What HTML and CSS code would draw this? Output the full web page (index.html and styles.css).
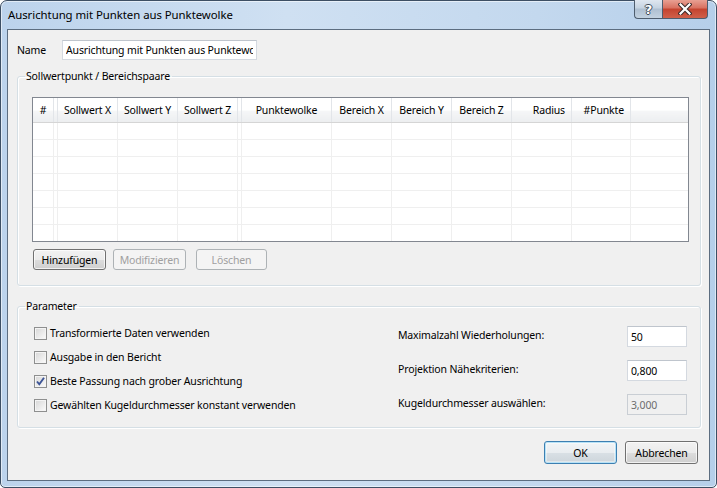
FILE: index.html
```html
<!DOCTYPE html>
<html lang="de">
<head>
    <meta charset="UTF-8">
    <title>Ausrichtung mit Punkten aus Punktewolke</title>
    <link rel="stylesheet" href="styles.css">
</head>
<body>
    <div class="window">
        <div class="titlebar">
            <span class="title">Ausrichtung mit Punkten aus Punktewolke</span>
            <div class="caption-buttons">
                <div class="cap-btn help">?</div>
                <div class="cap-btn close">
                    <svg width="14" height="12" viewBox="0 0 14 12">
                        <path d="M2.5 1.5 L11.5 10.5 M11.5 1.5 L2.5 10.5" stroke="#3b2a2a" stroke-width="4.2" stroke-linecap="square"/>
                        <path d="M2.5 1.5 L11.5 10.5 M11.5 1.5 L2.5 10.5" stroke="#fff" stroke-width="2.2" stroke-linecap="square"/>
                    </svg>
                </div>
            </div>
        </div>

        <div class="client">
            <div class="name-row">
                <label>Name</label>
                <input class="text-input name-input" type="text" value="Ausrichtung mit Punkten aus Punktewolke">
            </div>

            <fieldset class="group pairs">
                <legend>Sollwertpunkt / Bereichspaare</legend>
                <div class="grid">
                    <table>
                        <thead>
                            <tr>
                                <th class="c-num">#</th>
                                <th class="c-gap"></th>
                                <th class="c-val">Sollwert X</th>
                                <th class="c-val">Sollwert Y</th>
                                <th class="c-val">Sollwert Z</th>
                                <th class="c-gap"></th>
                                <th class="c-cloud">Punktewolke</th>
                                <th class="c-val">Bereich X</th>
                                <th class="c-val">Bereich Y</th>
                                <th class="c-val">Bereich Z</th>
                                <th class="c-radius right">Radius</th>
                                <th class="c-pts right">#Punkte</th>
                                <th class="c-rest"></th>
                            </tr>
                        </thead>
                        <tbody id="gridBody"></tbody>
                    </table>
                </div>
                <div class="grid-buttons">
                    <button class="btn">Hinzufügen</button>
                    <button class="btn" disabled>Modifizieren</button>
                    <button class="btn btn-delete" disabled>Löschen</button>
                </div>
            </fieldset>

            <fieldset class="group params">
                <legend>Parameter</legend>
                <div class="params-body">
                    <div class="checks">
                        <label class="check"><span class="box"></span>Transformierte Daten verwenden</label>
                        <label class="check"><span class="box"></span>Ausgabe in den Bericht</label>
                        <label class="check"><span class="box">
                            <svg width="11" height="11" viewBox="0 0 11 11"><path d="M2 5.5 L4.3 8.3 L9 1.8" fill="none" stroke="#3c5496" stroke-width="1.9"/></svg>
                        </span>Beste Passung nach grober Ausrichtung</label>
                        <label class="check"><span class="box"></span>Gewählten Kugeldurchmesser konstant verwenden</label>
                    </div>
                    <div class="fields">
                        <div class="field">
                            <span>Maximalzahl Wiederholungen:</span>
                            <input class="text-input small-input" type="text" value="50">
                        </div>
                        <div class="field">
                            <span>Projektion Nähekriterien:</span>
                            <input class="text-input small-input" type="text" value="0,800">
                        </div>
                        <div class="field">
                            <span>Kugeldurchmesser auswählen:</span>
                            <input class="text-input small-input" type="text" value="3,000" disabled>
                        </div>
                    </div>
                </div>
            </fieldset>

            <div class="dialog-buttons">
                <button class="btn btn-default">OK</button>
                <button class="btn">Abbrechen</button>
            </div>
        </div>
    </div>

    <script>
        // leere Zeilen für die Tabelle
        let body = document.getElementById("gridBody");
        for (let i = 0; i < 7; i++) {
            let row = document.createElement("tr");
            for (let j = 0; j < 13; j++) {
                row.appendChild(document.createElement("td"));
            }
            body.appendChild(row);
        }
    </script>
</body>
</html>
```

FILE: styles.css
```css
body {
    margin: 0;
    width: 717px;
    height: 488px;
    overflow: hidden;
    font-family: "Noto Sans", "Open Sans", sans-serif;
    font-size: 10.5px;
    letter-spacing: -0.15px;
    color: #000;
    background: #fff;
}
.window {
    box-sizing: border-box;
    width: 717px;
    height: 488px;
    border: 1px solid #3d4f64;
    border-radius: 7px 7px 5px 5px;
    background: linear-gradient(90deg, #bcd3ec 0%, #cfe0f2 40%, #c3d8ee 75%, #b6cfea 100%);
    box-shadow: inset 0 0 0 1px rgba(255, 255, 255, 0.55);
    padding: 0 6px 6px 6px;
    display: flex;
    flex-direction: column;
}
.titlebar {
    height: 28px;
    display: flex;
    justify-content: space-between;
    align-items: flex-start;
}
.title {
    font-size: 11.4px;
    letter-spacing: -0.05px;
    margin-top: 6px;
    margin-left: 1px;
    color: #000;
}
.caption-buttons {
    display: flex;
    margin-top: -1px;
    margin-right: 2px;
}
.cap-btn {
    height: 19px;
    border: 1px solid #4e5d6e;
    border-top: none;
    display: flex;
    align-items: center;
    justify-content: center;
    box-sizing: border-box;
}
.help {
    width: 28px;
    border-radius: 0 0 0 4px;
    border-right: none;
    background: linear-gradient(#dfe7f0 0%, #c5d3e1 45%, #aebfd1 50%, #c3d2e0 100%);
    font-family: "DejaVu Sans", sans-serif;
    font-weight: bold;
    font-size: 13px;
    color: #fff;
    text-shadow: 1px 0 #3e4a58, -1px 0 #3e4a58, 0 1px #3e4a58, 0 -1px #3e4a58;
}
.close {
    width: 46px;
    border-radius: 0 0 4px 0;
    background: linear-gradient(#e8a093 0%, #d8705f 45%, #c4432f 50%, #d0604a 100%);
}
.client {
    flex: 1;
    border: 1px solid #5c6d80;
    background: #f0f0f0;
    padding: 0 8px 0 9px;
    display: flex;
    flex-direction: column;
}
.name-row {
    display: flex;
    align-items: center;
    margin-top: 10px;
}
.name-row label {
    width: 45px;
}
.text-input {
    box-sizing: border-box;
    height: 20px;
    border: 1px solid #d4d9e0;
    border-top-color: #bfc5cd;
    background: #fff;
    font-family: inherit;
    font-size: 10.5px;
    letter-spacing: -0.15px;
    padding: 0 3px;
    color: #000;
    outline: none;
}
.text-input:disabled {
    background: #f0f0f0;
    color: #6d6d6d;
    border-color: #c9ced4;
}
.name-input {
    width: 195px;
}
.group {
    border: 1px solid #d5dfe5;
    box-shadow: inset 1px 1px #fff, 1px 1px #fff;
    border-radius: 3px;
    margin: 8px 0 0 0;
    padding: 13px 11px 15px 14px;
}
.group legend {
    padding: 0 2px 0 1px;
    margin-left: -7px;
    line-height: 16px;
}
.grid {
    height: 145px;
    box-sizing: border-box;
    border: 1px solid #828790;
    background: #fff;
    overflow: hidden;
}
.grid table {
    border-collapse: collapse;
    table-layout: fixed;
    width: 100%;
}
.grid th {
    height: 24px;
    padding: 0;
    font-weight: normal;
    text-align: center;
    white-space: nowrap;
    background: linear-gradient(#ffffff 0%, #ffffff 50%, #f5f6f7 55%, #eceef0 100%);
    border-right: 1px solid #e2e5e9;
    border-bottom: 1px solid #d5d5d5;
}
.grid th.right {
    text-align: right;
    padding-right: 6px;
}
.grid td {
    height: 16px;
    padding: 0;
    border-right: 1px solid #efefef;
    border-bottom: 1px solid #efefef;
}
.c-num { width: 20px; }
.c-gap { width: 3px; }
.c-val { width: 59px; }
.c-cloud { width: 89px; }
.c-radius { width: 53px; }
.c-pts { width: 52px; }
.grid th.c-rest, .grid td:last-child {
    border-right: none;
}
.grid-buttons {
    display: flex;
    margin-top: 7px;
    padding-left: 1px;
}
.btn {
    box-sizing: border-box;
    width: 73px;
    height: 21px;
    border: 1px solid #707070;
    border-radius: 3px;
    background: linear-gradient(#f2f2f2 0%, #ebebeb 50%, #dddddd 51%, #cfcfcf 100%);
    box-shadow: inset 0 0 0 1px rgba(255, 255, 255, 0.7);
    font-family: inherit;
    font-size: 10.5px;
    letter-spacing: -0.15px;
    color: #000;
    padding: 0;
    margin-right: 7px;
}
.btn:disabled {
    color: #a0a0a0;
    border-color: #adb2b5;
    background: #f4f4f4;
    box-shadow: none;
}
.btn-delete {
    margin-left: 3px;
    width: 71px;
}
.params {
    margin-top: 12px;
    padding: 7px 13px 10px 16px;
}
.params legend {
    margin-left: -9px;
}
.params-body {
    display: flex;
    justify-content: space-between;
}
.check {
    display: flex;
    align-items: center;
    height: 24px;
}
.box {
    box-sizing: border-box;
    width: 13px;
    height: 13px;
    border: 1px solid #8e8f8f;
    background: linear-gradient(135deg, #d6d6d6 0%, #f4f4f4 80%, #ffffff 100%);
    box-shadow: inset 0 0 0 1px #f4f4f4;
    margin-right: 3px;
    display: flex;
    align-items: center;
    justify-content: center;
}
.fields {
    width: 289px;
    padding-top: 5px;
}
.field {
    display: flex;
    justify-content: space-between;
    align-items: center;
    height: 21px;
    margin-bottom: 13px;
}
.field:last-child {
    margin-bottom: 0;
}
.field span {
    margin-top: -4px;
}
.small-input {
    width: 60px;
    height: 21px;
}
.dialog-buttons {
    display: flex;
    justify-content: flex-end;
    margin-top: 13px;
    padding-right: 3px;
}
.dialog-buttons .btn {
    width: 73px;
    height: 23px;
    margin-right: 0;
    margin-left: 8px;
}
.btn-default {
    border-color: #3c7fb1;
    box-shadow: inset 0 0 0 1px #b7e2f7, inset 0 0 0 2px rgba(255, 255, 255, 0.4);
    background: linear-gradient(#f1f4f6 0%, #e9edf0 50%, #d9e0e5 51%, #cdd5db 100%);
}
```
